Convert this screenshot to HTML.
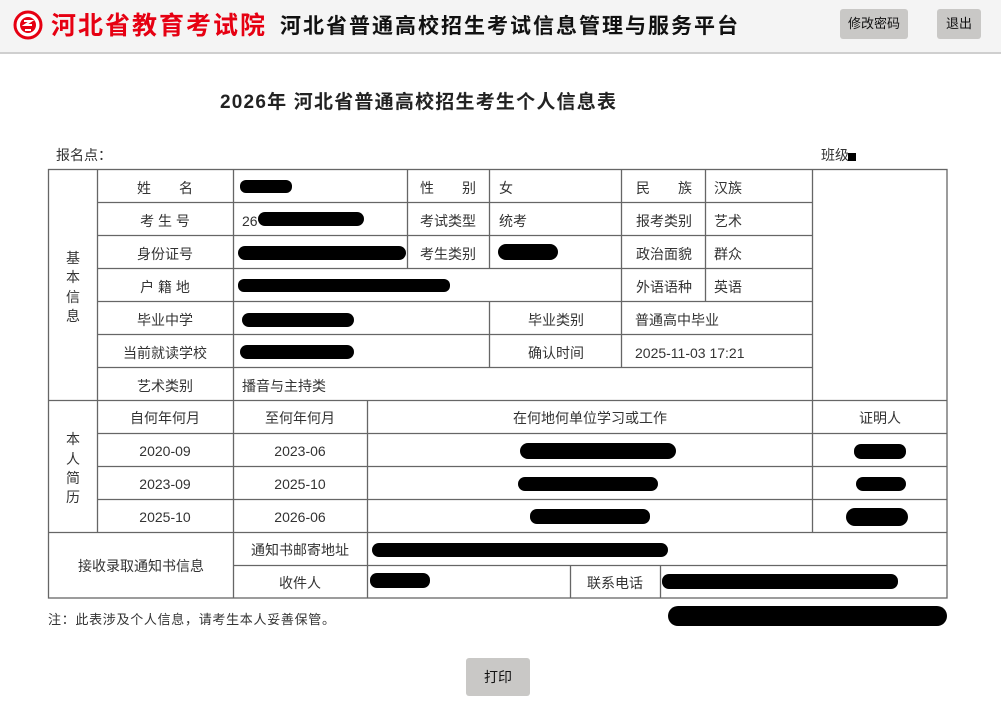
<!DOCTYPE html>
<html><head><meta charset="utf-8"><style>
body{margin:0;width:1001px;height:703px;background:#fff;position:relative;overflow:hidden;font-family:"Liberation Sans","Noto Sans CJK SC",sans-serif;}
.hd{position:absolute;left:0;top:0;width:1001px;height:52px;background:#f4f4f4;border-bottom:2px solid #cfcfcf;}
.btn{position:absolute;background:#c9c8c6;border-radius:3px;font-size:13px;color:#111;text-align:center;}
</style></head><body>
<div class="hd">
<svg width="1001" height="52" style="position:absolute;left:0;top:0">
<circle cx="28" cy="25" r="13" fill="#fff" stroke="#e60012" stroke-width="3"/>
<circle cx="28" cy="25" r="8" fill="#e60012"/>
<path d="M24 21 h7 l-6 4 h7 M25 30 h6" stroke="#fff" stroke-width="2" fill="none"/>
<text x="51" y="34" font-size="25" font-weight="bold" fill="#e60012" font-family="Noto Sans CJK SC,sans-serif" textLength="214">河北省教育考试院</text>
<text x="280" y="33" font-size="21" font-weight="bold" fill="#111" font-family="Noto Sans CJK SC,sans-serif" textLength="458">河北省普通高校招生考试信息管理与服务平台</text>
</svg>
<div class="btn" style="left:840px;top:9px;width:68px;height:30px;line-height:30px">修改密码</div>
<div class="btn" style="left:937px;top:9px;width:44px;height:30px;line-height:30px">退出</div>
</div>
<svg width="1001" height="703" style="position:absolute;left:0;top:0" font-family="Liberation Sans,Noto Sans CJK SC,sans-serif" font-size="14" fill="#333">
<text x="220" y="108" font-size="19" font-weight="bold" fill="#222" textLength="396">2026年 河北省普通高校招生考生个人信息表</text>
<text x="56" y="160">报名点：</text>
<text x="821" y="160">班级</text><rect x="848" y="153" width="8" height="8" fill="#000"/>
<g stroke="#666" stroke-width="1.3" fill="none">
<rect x="48.5" y="169.5" width="898.5" height="428.5"/>
<path d="M48 400.5H947M48 532.5H947M97.5 169V532M233.5 169V598M812.5 169V532"/>
<path d="M97 202.5H812M97 235.5H812M97 268.5H812M97 301.5H812M97 334.5H812M97 367.5H812"/>
<path d="M407.5 169V268M489.5 169V268M489.5 301V367M621.5 169V367M705.5 169V301"/>
<path d="M97 433.5H947M97 466.5H947M97 499.5H947M367.5 401V598M233 565.5H947M570.5 565V598M660.5 565V598"/>
</g>
<g transform="translate(0,1)">
<g text-anchor="middle">
<text x="73" y="262">基</text><text x="73" y="281">本</text><text x="73" y="301">信</text><text x="73" y="320">息</text>
<text x="73" y="443">本</text><text x="73" y="463">人</text><text x="73" y="482">简</text><text x="73" y="501">历</text>
<text x="165" y="192">姓　　名</text><text x="165" y="225">考 生 号</text><text x="165" y="258">身份证号</text>
<text x="165" y="291">户 籍 地</text><text x="165" y="324">毕业中学</text><text x="165" y="357">当前就读学校</text><text x="165" y="390">艺术类别</text>
<text x="448" y="192">性　　别</text><text x="448" y="225">考试类型</text><text x="448" y="258">考生类别</text>
<text x="556" y="324">毕业类别</text><text x="556" y="357">确认时间</text>
<text x="664" y="192">民　　族</text><text x="664" y="225">报考类别</text><text x="664" y="258">政治面貌</text><text x="664" y="291">外语语种</text>
<text x="165" y="422">自何年何月</text><text x="300" y="422">至何年何月</text><text x="590" y="422">在何地何单位学习或工作</text><text x="880" y="422">证明人</text>
<text x="165" y="455">2020-09</text><text x="300" y="455">2023-06</text>
<text x="165" y="488">2023-09</text><text x="300" y="488">2025-10</text>
<text x="165" y="521">2025-10</text><text x="300" y="521">2026-06</text>
<text x="141" y="570">接收录取通知书信息</text>
<text x="300" y="554">通知书邮寄地址</text><text x="300" y="587">收件人</text><text x="615" y="587">联系电话</text>
</g>
<text x="499" y="192">女</text><text x="242" y="225">26</text><text x="499" y="225">统考</text>
<text x="714" y="192">汉族</text><text x="714" y="225">艺术</text><text x="714" y="258">群众</text><text x="714" y="291">英语</text>
<text x="635" y="324">普通高中毕业</text><text x="635" y="357">2025-11-03 17:21</text><text x="242" y="390">播音与主持类</text>
</g>
<text x="48" y="624" font-size="13" textLength="287">注：此表涉及个人信息，请考生本人妥善保管。</text>
<g fill="#000">
<rect x="240" y="180" width="52" height="13" rx="6"/>
<rect x="258" y="212" width="106" height="14" rx="7"/>
<rect x="238" y="246" width="168" height="14" rx="7"/>
<rect x="498" y="244" width="60" height="16" rx="8"/>
<rect x="238" y="279" width="212" height="13" rx="6"/>
<rect x="242" y="313" width="112" height="14" rx="7"/>
<rect x="240" y="345" width="114" height="14" rx="7"/>
<rect x="520" y="443" width="156" height="16" rx="8"/>
<rect x="518" y="477" width="140" height="14" rx="7"/>
<rect x="530" y="509" width="120" height="15" rx="7"/>
<rect x="854" y="444" width="52" height="15" rx="7"/>
<rect x="856" y="477" width="50" height="14" rx="7"/>
<rect x="846" y="508" width="62" height="18" rx="9"/>
<rect x="372" y="543" width="296" height="14" rx="7"/>
<rect x="370" y="573" width="60" height="15" rx="7"/>
<rect x="662" y="574" width="236" height="15" rx="7"/>
<rect x="668" y="606" width="279" height="20" rx="10"/>
</g>
</svg>
<div class="btn" style="left:466px;top:658px;width:64px;height:38px;line-height:38px;font-size:14px">打印</div>
</body></html>
